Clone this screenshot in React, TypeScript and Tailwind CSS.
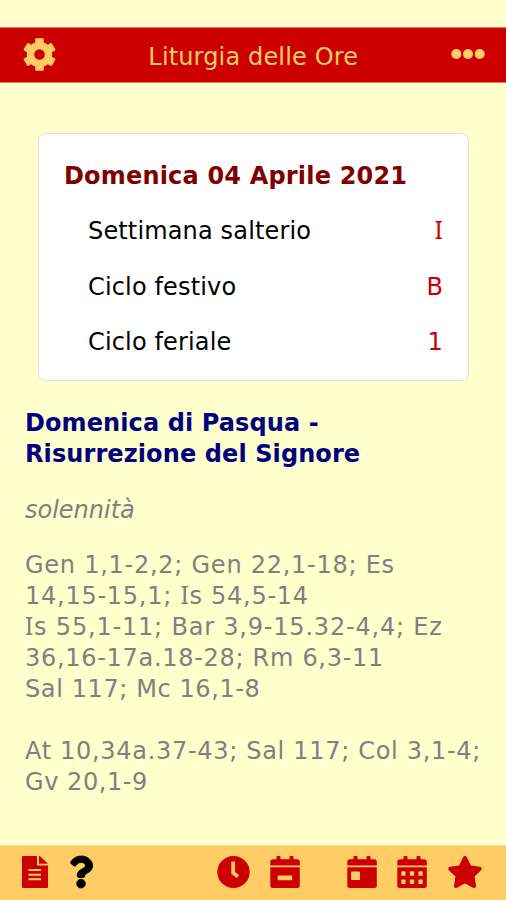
import { Fragment, ReactNode } from "react";
import { FaQuestion, FaStar } from "react-icons/fa";

const cycles = [
  { label: "Settimana salterio", value: "I" },
  { label: "Ciclo festivo", value: "B" },
  { label: "Ciclo feriale", value: "1" },
];

const vigilReadings = [
  { text: "Gen 1,1-2,2; Gen 22,1-18; Es", tracking: "tracking-[0.74px]" },
  { text: "14,15-15,1; Is 54,5-14", tracking: "tracking-[0.74px]" },
  { text: "Is 55,1-11; Bar 3,9-15.32-4,4; Ez", tracking: "tracking-[0.8px]" },
  { text: "36,16-17a.18-28; Rm 6,3-11", tracking: "tracking-[0.7px]" },
  { text: "Sal 117; Mc 16,1-8", tracking: "tracking-[0.6px]" },
];

const dayReadings = [
  { text: "At 10,34a.37-43; Sal 117; Col 3,1-4;", tracking: "tracking-[0.69px]" },
  { text: "Gv 20,1-9", tracking: "tracking-[0.55px]" },
];

function GearIcon() {
  return (
    <svg viewBox="0 0 33 33" className="size-[33px]" fill="none">
      <circle cx="16.5" cy="16.5" r="9" stroke="currentColor" strokeWidth="7.4" />
      {[0, 60, 120].map((angle) => (
        <g key={angle} transform={`rotate(${angle} 16.5 16.5)`} fill="currentColor">
          <rect x="12.2" y="0.2" width="8.6" height="7" rx="0.9" />
          <rect x="12.2" y="25.8" width="8.6" height="7" rx="0.9" />
        </g>
      ))}
    </svg>
  );
}

function MoreIcon() {
  return (
    <svg viewBox="0 0 34 12" className="h-3 w-[34px]" fill="currentColor">
      <circle cx="5.3" cy="6" r="5" />
      <circle cx="17" cy="6" r="5" />
      <circle cx="28.7" cy="6" r="5" />
    </svg>
  );
}

function DocumentIcon() {
  return (
    <svg viewBox="0 0 26 32" className="h-8 w-[26px]" fill="currentColor">
      <path d="M1 0h14v8.5a1 1 0 0 0 1 1h10V31a1 1 0 0 1-1 1H1a1 1 0 0 1-1-1V1a1 1 0 0 1 1-1z" />
      <path d="M17 0h.8L26 7.8H17z" />
      <path
        d="M6.5 14h12.5M6.5 18.7h12.5M6.5 23.3h12.5"
        stroke="#ffcc66"
        strokeWidth="2.1"
      />
    </svg>
  );
}

function ClockIcon() {
  return (
    <svg viewBox="0 0 33 32" className="ml-[123px] h-8 w-[33px]" fill="none">
      <ellipse cx="16.5" cy="16" rx="16.2" ry="16" fill="currentColor" />
      <path d="M16.2 5.5V17L21 20.5" stroke="#ffcc66" strokeWidth="3.8" />
    </svg>
  );
}

function CalendarIcon({ className, children }: { className: string; children: ReactNode }) {
  return (
    <svg viewBox="0 0 30 32" className={`h-8 w-[30px] ${className}`} fill="currentColor">
      <path d="M3 3.2h3.5V1a1 1 0 0 1 1-1h2a1 1 0 0 1 1 1v2.2h9V1a1 1 0 0 1 1-1h2a1 1 0 0 1 1 1v2.2H27a2.8 2.8 0 0 1 2.8 2.8v3.5H.3V6A2.8 2.8 0 0 1 3 3.2z" />
      <path d="M.3 11.3h29.5v18.2a2.5 2.5 0 0 1-2.5 2.5H2.8a2.5 2.5 0 0 1-2.5-2.5z" />
      <g fill="#ffcc66">{children}</g>
    </svg>
  );
}

function Header() {
  return (
    <header className="flex h-[56px] items-center justify-between border-y border-[#e57361] bg-[#cc0000] pr-[21px] pb-[2px] pl-[22.5px] text-[#ffcc66]">
      <button aria-label="Impostazioni">
        <GearIcon />
      </button>
      <h1 className="pt-[6px] text-[24px] tracking-[0.15px] whitespace-nowrap">
        Liturgia delle Ore
      </h1>
      <button aria-label="Altro">
        <MoreIcon />
      </button>
    </header>
  );
}

function Numeral({ text }: { text: string }) {
  return (
    <>
      {text.split(/(I)/).map((part, i) =>
        part === "I" ? (
          <span key={i} className="font-['Noto_Sans',sans-serif] text-[24.5px] leading-none">
            {part}
          </span>
        ) : (
          <Fragment key={i}>{part}</Fragment>
        ),
      )}
    </>
  );
}

function DayCard() {
  return (
    <section className="mt-[50px] mr-[37px] ml-[38px] h-[248px] rounded-lg border border-[#dfdfdf] bg-white px-[25px] pt-[27px]">
      <h2 className="font-bold tracking-[0.18px] whitespace-nowrap text-[#800000]">
        Domenica 04 Aprile 2021
      </h2>
      {cycles.map((c) => (
        <div
          key={c.label}
          className="mt-[24.3px] flex h-[31px] justify-between pl-[24px] tracking-[0.15px]"
        >
          <span>{c.label}</span>
          <span className="text-[#cc0000]">
            <Numeral text={c.value} />
          </span>
        </div>
      ))}
    </section>
  );
}

function Readings({ lines }: { lines: { text: string; tracking: string }[] }) {
  return (
    <div className="whitespace-nowrap">
      {lines.map((line) => (
        <p key={line.text} className={line.tracking}>
          <Numeral text={line.text} />
        </p>
      ))}
    </div>
  );
}

function Toolbar() {
  return (
    <footer className="flex h-[55px] items-center border-t border-[#ffe08c] bg-[#ffcc66] pb-[2px] pl-[22px] text-[#cc0000]">
      <DocumentIcon />
      <FaQuestion
        className="ml-[20px] h-8 w-[26px] overflow-visible text-black"
        strokeWidth={14}
      />
      <ClockIcon />
      <CalendarIcon className="ml-[20px]">
        <rect x="7.7" y="19.5" width="14.5" height="4.7" rx="0.5" />
      </CalendarIcon>
      <CalendarIcon className="ml-[47px]">
        <rect x="4" y="15.5" width="9" height="8.5" rx="1" />
      </CalendarIcon>
      <CalendarIcon className="ml-[20px]">
        {[4.2, 12.8, 21.4].map((x) => (
          <Fragment key={x}>
            <rect x={x} y="15.3" width="4.4" height="4.5" rx="0.8" />
            <rect x={x} y="23.6" width="4.4" height="4.5" rx="0.8" />
          </Fragment>
        ))}
      </CalendarIcon>
      <FaStar className="ml-[20px] h-8 w-[36px]" />
    </footer>
  );
}

export default function App() {
  return (
    <div className="flex h-[900px] w-[506px] flex-col overflow-hidden bg-[#ffffcc] pt-[27px] font-['Verdana','DejaVu_Sans',sans-serif] text-[24px] leading-[31px] text-black">
      <Header />
      <main className="flex-1">
        <DayCard />
        <div className="mt-[27px] pl-[25px] text-[#808080]">
          <h2 className="font-bold tracking-[0.1px] whitespace-nowrap text-[#000080]">
            Domenica di Pasqua -
            <br />
            Risurrezione del Signore
          </h2>
          <p className="my-[24.5px] italic">solennità</p>
          <Readings lines={vigilReadings} />
          <div className="h-[31px]" />
          <Readings lines={dayReadings} />
        </div>
      </main>
      <Toolbar />
    </div>
  );
}
